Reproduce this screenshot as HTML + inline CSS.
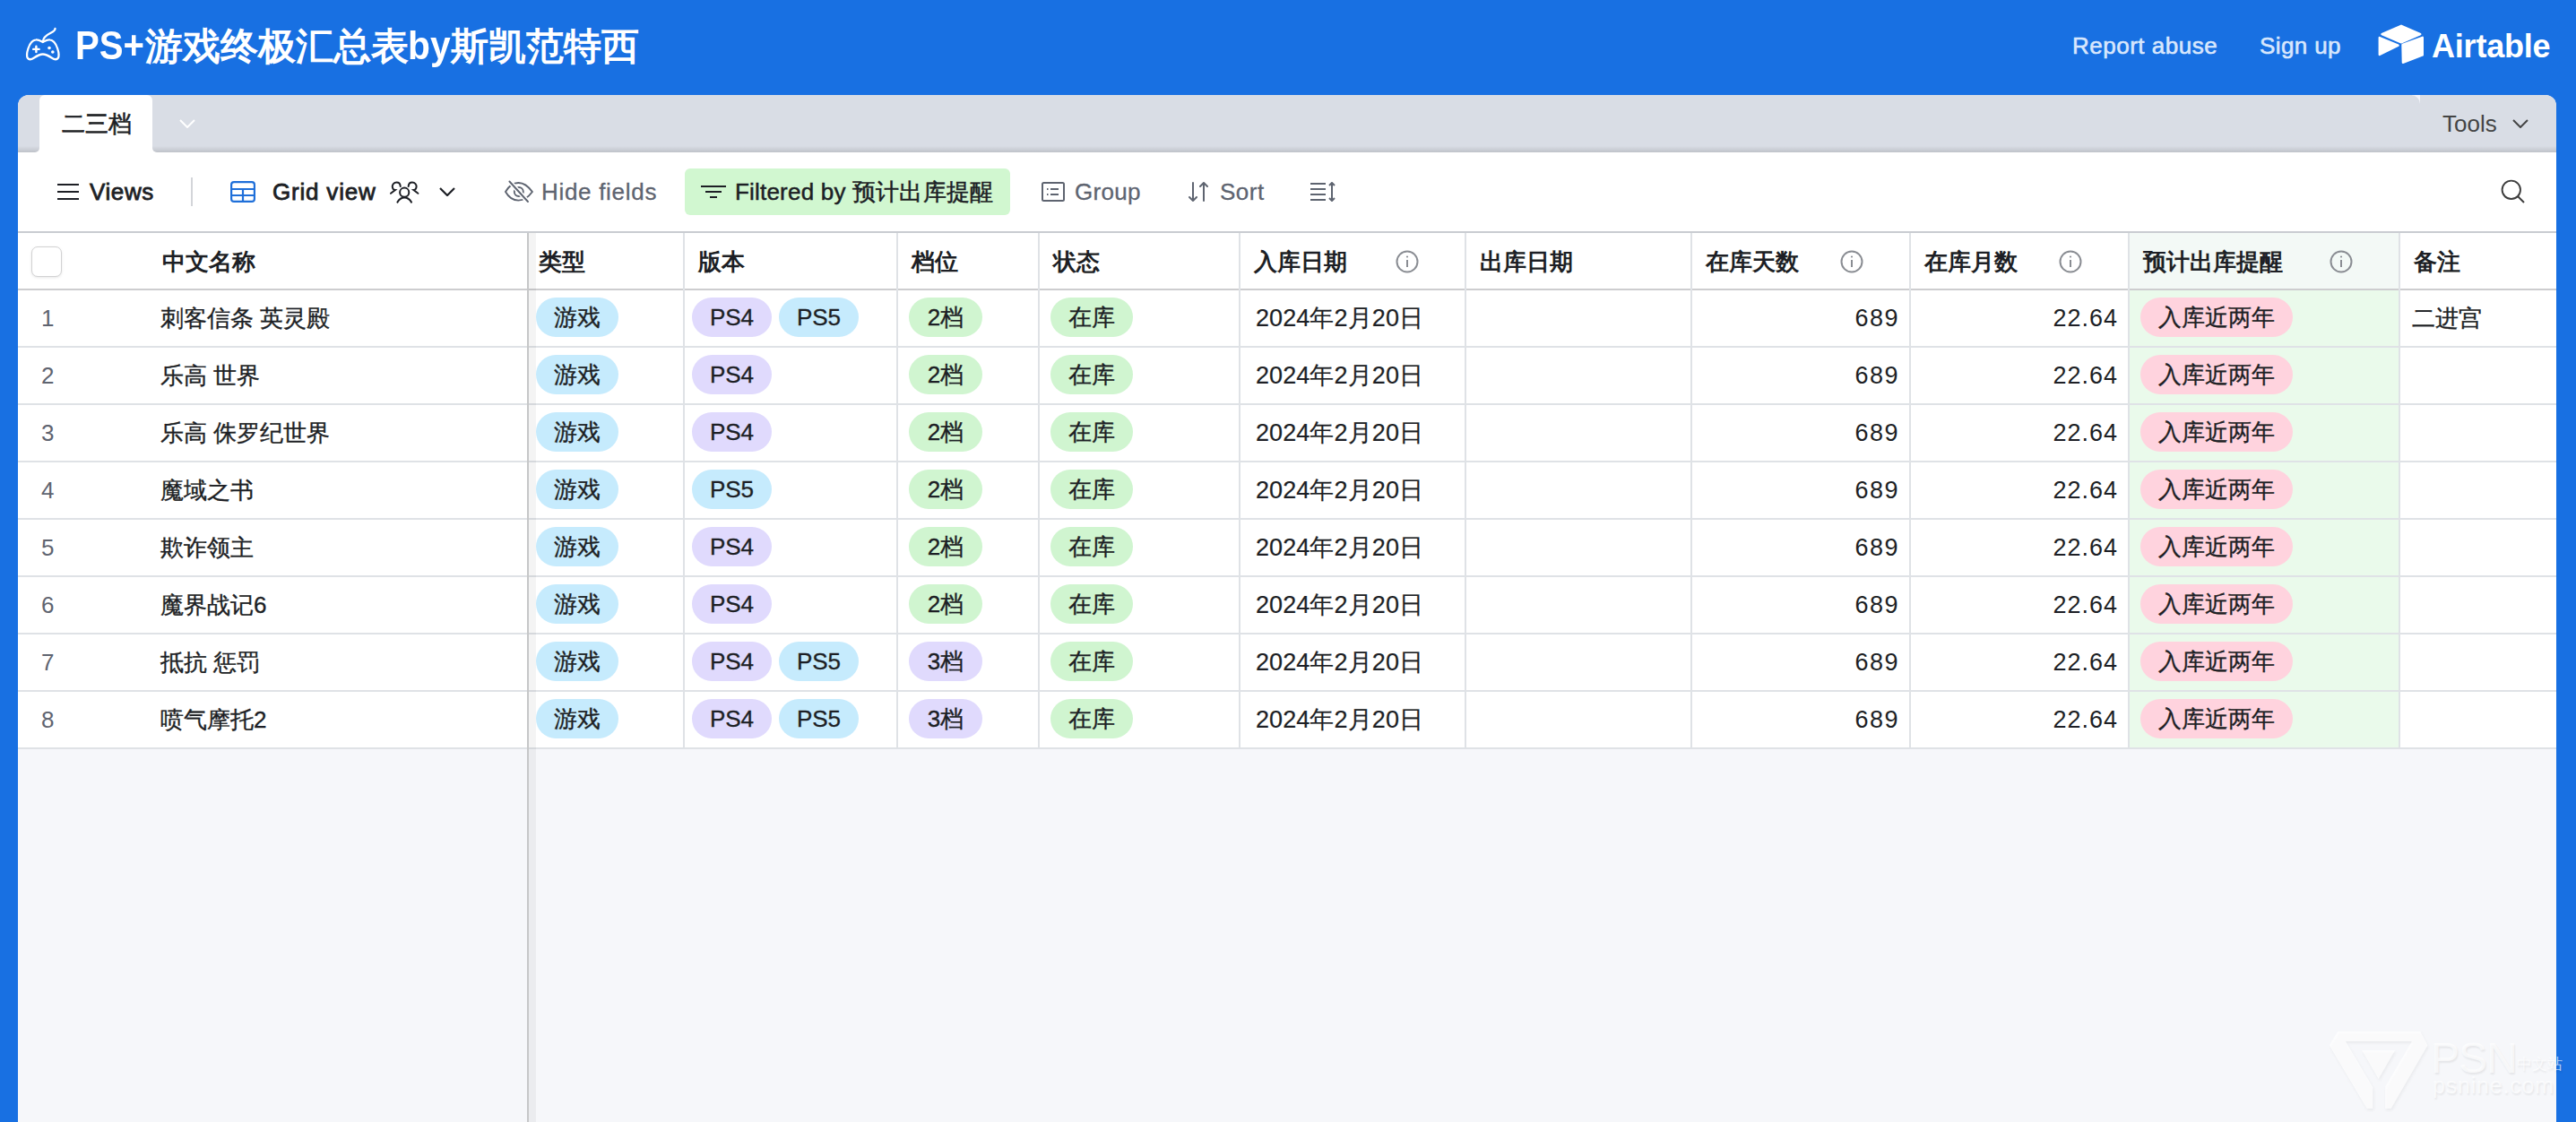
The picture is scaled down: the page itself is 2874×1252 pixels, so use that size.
<!DOCTYPE html>
<html><head><meta charset="utf-8">
<style>
*{box-sizing:border-box;margin:0;padding:0}
html,body{width:2874px;height:1252px;overflow:hidden;background:#1870e2;font-family:"Liberation Sans",sans-serif;color:#1d1f25}
.a{position:absolute}
.t{position:absolute;white-space:nowrap;font-size:26px;line-height:40px}
.pill{position:absolute;height:44px;border-radius:22px;font-size:26px;line-height:44px;white-space:nowrap;color:#1d1f25;text-align:center}
.hd{font-weight:700}
.s{-webkit-text-stroke:0.35px #1d1f25}
.pill{-webkit-text-stroke:0.35px #1d1f25}
</style></head><body>

<svg class="a" style="left:24px;top:26px" width="48" height="46" viewBox="0 0 48 46" fill="none" stroke="#fff" stroke-width="2.3" stroke-linecap="round" stroke-linejoin="round">
<path d="M23.8 20.5 C24 16 28 13 33 10.5 C36 9 37.5 7.5 37.5 6"/>
<path d="M23.8 21 C21 19.5 19 18 16 18.4 C12 18.8 9.5 22 7.5 28 C6 32.5 5.5 37 7 39 C8.5 41 11 40.5 14 38.5 C17 36.5 20 34.5 23.8 34.5 C27.6 34.5 30.6 36.5 33.6 38.5 C36.6 40.5 39.1 41 40.6 39 C42.1 37 41.6 32.5 40.1 28 C38.1 22 35.6 18.8 31.6 18.4 C28.6 18 26.6 19.5 23.8 21 Z"/>
<path d="M13.2 28.9 H19.6 M16.4 25.7 V32.1" stroke-width="2.4"/>
<circle cx="31" cy="27.5" r="1.8" fill="#fff" stroke="none"/>
<circle cx="34.8" cy="32" r="1.8" fill="#fff" stroke="none"/>
</svg>
<div class="t" style="left:84px;top:21px;font-size:44px;line-height:60px;font-weight:700;color:#fff;transform:scaleX(.9125);transform-origin:0 0">PS+</div>
<div class="t" style="left:162px;top:22px;font-size:42px;line-height:60px;font-weight:700;color:#fff">游戏终极汇总表</div>
<div class="t" style="left:455px;top:21px;font-size:44px;line-height:60px;font-weight:700;color:#fff;transform:scaleX(.927);transform-origin:0 0">by</div>
<div class="t" style="left:503px;top:22px;font-size:42px;line-height:60px;font-weight:700;color:#fff">斯凯范特西</div>
<div class="t" style="left:2312px;top:31px;color:#d8e7fd;letter-spacing:0.5px;-webkit-text-stroke:0.6px #d8e7fd">Report abuse</div>
<div class="t" style="left:2521px;top:31px;color:#d8e7fd;letter-spacing:0.4px;-webkit-text-stroke:0.6px #d8e7fd">Sign up</div>
<svg class="a" style="left:2645px;top:22px" width="70" height="56" viewBox="0 0 70 56" fill="#fff" stroke="#fff" stroke-width="2.4" stroke-linejoin="round">
<path d="M12.5 16.2 L34 6.8 L55.3 16.2 L34 25.3 Z"/>
<path d="M9.8 20 L30.6 28.7 L9.8 39 Z"/>
<path d="M35.5 28 L57.8 19.8 V39.5 L35.9 47.8 Z"/>
</svg>
<div class="t" style="left:2713px;top:28px;font-size:36px;line-height:48px;font-weight:700;color:#fff;letter-spacing:-0.2px">Airtable</div>
<div class="a" style="left:20px;top:106px;width:2832px;height:1146px;background:#f6f7fa;border-radius:12px 12px 0 0;overflow:hidden">
<div class="a" style="left:0px;top:0px;width:2832px;height:64px;background:#d9dde5"></div>
<div class="a" style="left:0px;top:57px;width:2832px;height:7px;background:linear-gradient(rgba(0,0,0,0),rgba(0,0,0,0.12))"></div>
</div>
<div class="a" style="left:38px;top:163px;width:138px;height:7px;background:#fff"></div>
<div class="a" style="left:34px;top:158px;width:10px;height:12px;background:#d9dde5;border-bottom-right-radius:5px;overflow:hidden"><div class="a" style="left:0;top:5px;width:10px;height:7px;background:linear-gradient(rgba(0,0,0,0),rgba(0,0,0,0.12))"></div></div>
<div class="a" style="left:170px;top:158px;width:10px;height:12px;background:#d9dde5;border-bottom-left-radius:5px;overflow:hidden"><div class="a" style="left:0;top:5px;width:10px;height:7px;background:linear-gradient(rgba(0,0,0,0),rgba(0,0,0,0.12))"></div></div>
<div class="a" style="left:44px;top:106px;width:126px;height:64px;background:#fff;border-radius:6px 6px 0 0"></div>
<div class="t" style="left:69px;top:118px;font-weight:500;-webkit-text-stroke:0.6px #1d1f25">二三档</div>
<svg class="a" style="left:200px;top:133px" width="18" height="10" viewBox="0 0 18 10" fill="none" stroke="#fff" stroke-width="2"><path d="M1 1 L9 9 L17 1"/></svg>
<div class="a" style="left:2691px;top:106px;width:9px;height:10px;background:#f4f4fb"></div>
<div class="a" style="left:2681px;top:106px;width:19px;height:20px;background:#d9dde5;border-top-right-radius:10px"></div>
<div class="t" style="left:2725px;top:118px;color:#444">Tools</div>
<svg class="a" style="left:2803px;top:133px" width="18" height="10" viewBox="0 0 18 10" fill="none" stroke="#444" stroke-width="2"><path d="M1 1 L9 9 L17 1"/></svg>
<div class="a" style="left:20px;top:170px;width:2832px;height:88px;background:#fff"></div>
<div class="a" style="left:20px;top:258px;width:2832px;height:2px;background:#c9ccd1"></div>
<svg class="a" style="left:64px;top:204px" width="24" height="20" viewBox="0 0 24 20" fill="none" stroke="#1d1f25" stroke-width="2.2"><path d="M0 2 H24 M0 10 H24 M0 18 H24"/></svg>
<div class="t" style="left:100px;top:194px;-webkit-text-stroke:0.8px #1d1f25;letter-spacing:0.6px">Views</div>
<div class="a" style="left:213px;top:198px;width:2px;height:32px;background:#d3d5d9"></div>
<svg class="a" style="left:257px;top:202px" width="28" height="24" viewBox="0 0 28 24" fill="none" stroke="#1f6fd9" stroke-width="2.2"><rect x="1.1" y="1.1" width="25.8" height="21.8" rx="3"/><path d="M1 9 H27 M1 16 H27 M14 9 V23"/></svg>
<div class="t" style="left:304px;top:194px;-webkit-text-stroke:0.8px #1d1f25;letter-spacing:0.8px">Grid view</div>
<svg class="a" style="left:435px;top:202px" width="33" height="26" viewBox="0 0 33 26" fill="none" stroke="#1d1f25" stroke-width="2" stroke-linecap="round"><circle cx="16.2" cy="12.7" r="5.1"/><path d="M8.4 23.6 C10.5 20.2 13 18.6 16.2 18.6 C19.4 18.6 21.9 20.2 24 23.6"/><path d="M11.75 6 C11.5 3 9.5 1.6 7.5 1.6 C4.5 1.6 2.5 4 2.8 6.5 C3 8.5 4.5 10 5.9 10.1 L1 13.8"/><path d="M20.65 6 C20.9 3 22.9 1.6 24.9 1.6 C27.9 1.6 29.9 4 29.6 6.5 C29.4 8.5 27.9 10 26.5 10.1 L31.4 13.8"/></svg>
<svg class="a" style="left:490px;top:209px" width="18" height="10" viewBox="0 0 18 10" fill="none" stroke="#1d1f25" stroke-width="2.2"><path d="M1 1 L9 9 L17 1"/></svg>
<svg class="a" style="left:560px;top:200px" width="38" height="28" viewBox="0 0 38 28" fill="none" stroke="#5e6470" stroke-width="1.9" stroke-linecap="round"><path d="M4 14 C8 7 13 4 18.4 4 C23.8 4 28.8 7 33.9 14 C28.8 21 23.8 23.6 18.4 23.6 C13 23.6 8 21 4 14 Z"/><circle cx="18.8" cy="14" r="5"/><path d="M8.4 2.5 L29 25" stroke="#fff" stroke-width="5"/><path d="M8.4 2.5 L29 25"/></svg>
<div class="t" style="left:604px;top:194px;color:#5e6470;letter-spacing:0.7px;-webkit-text-stroke:0.3px #5e6470">Hide fields</div>
<div class="a" style="left:764px;top:188px;width:363px;height:52px;background:#d1f7d0;border-radius:6px"></div>
<svg class="a" style="left:782px;top:206px" width="28" height="16" viewBox="0 0 28 16" fill="none" stroke="#1d1f25" stroke-width="2.2"><path d="M0 2 H28 M5 8 H23 M10 14 H18"/></svg>
<div class="t" style="left:820px;top:194px;letter-spacing:0.2px;-webkit-text-stroke:0.5px #1d1f25">Filtered by 预计出库提醒</div>
<svg class="a" style="left:1162px;top:203px" width="26" height="22" viewBox="0 0 26 22" fill="none" stroke="#5e6470" stroke-width="2"><rect x="1" y="1" width="24" height="20" rx="1.5"/><path d="M10 8 H19 M10 14 H19"/><path d="M6 8 H7.5 M6 14 H7.5"/></svg>
<div class="t" style="left:1199px;top:194px;color:#5e6470;letter-spacing:0.3px;-webkit-text-stroke:0.3px #5e6470">Group</div>
<svg class="a" style="left:1326px;top:203px" width="22" height="22" viewBox="0 0 22 22" fill="none" stroke="#5e6470" stroke-width="2" stroke-linecap="round" stroke-linejoin="round"><path d="M5 1 V21 M1 17 L5 21 L9 17"/><path d="M17 21 V1 M13 5 L17 1 L21 5"/></svg>
<div class="t" style="left:1361px;top:194px;color:#5e6470;letter-spacing:0.5px;-webkit-text-stroke:0.3px #5e6470">Sort</div>
<svg class="a" style="left:1462px;top:203px" width="28" height="22" viewBox="0 0 28 22" fill="none" stroke="#5e6470" stroke-width="2"><path d="M0 2 H17 M0 8 H17 M0 14 H17 M0 20 H17"/><path d="M24 1 V21 M21 4 L24 1 L27 4 M21 18 L24 21 L27 18" stroke-linejoin="round"/></svg>
<svg class="a" style="left:2790px;top:200px" width="28" height="28" viewBox="0 0 28 28" fill="none" stroke="#3d3d3d" stroke-width="1.9"><circle cx="11.8" cy="11.8" r="10.2"/><path d="M19 19 L26 26"/></svg>
<div class="a" style="left:20px;top:260px;width:2832px;height:576px;background:#fff"></div>
<div class="a" style="left:2376px;top:260px;width:300px;height:576px;background:#eafaeb"></div>
<div class="a" style="left:2376px;top:260px;width:300px;height:62px;background:#f3f9f6"></div>
<div class="a" style="left:20px;top:322px;width:2832px;height:2px;background:#cdcdcf"></div>
<div class="a" style="left:20px;top:386px;width:2832px;height:2px;background:#dfe2e6"></div>
<div class="a" style="left:20px;top:450px;width:2832px;height:2px;background:#dfe2e6"></div>
<div class="a" style="left:20px;top:514px;width:2832px;height:2px;background:#dfe2e6"></div>
<div class="a" style="left:20px;top:578px;width:2832px;height:2px;background:#dfe2e6"></div>
<div class="a" style="left:20px;top:642px;width:2832px;height:2px;background:#dfe2e6"></div>
<div class="a" style="left:20px;top:706px;width:2832px;height:2px;background:#dfe2e6"></div>
<div class="a" style="left:20px;top:770px;width:2832px;height:2px;background:#dfe2e6"></div>
<div class="a" style="left:20px;top:834px;width:2832px;height:2px;background:#dfe2e6"></div>
<div class="a" style="left:762px;top:260px;width:2px;height:576px;background:#dfe2e6"></div>
<div class="a" style="left:1000px;top:260px;width:2px;height:576px;background:#dfe2e6"></div>
<div class="a" style="left:1158px;top:260px;width:2px;height:576px;background:#dfe2e6"></div>
<div class="a" style="left:1382px;top:260px;width:2px;height:576px;background:#dfe2e6"></div>
<div class="a" style="left:1634px;top:260px;width:2px;height:576px;background:#dfe2e6"></div>
<div class="a" style="left:1886px;top:260px;width:2px;height:576px;background:#dfe2e6"></div>
<div class="a" style="left:2130px;top:260px;width:2px;height:576px;background:#dfe2e6"></div>
<div class="a" style="left:2374px;top:260px;width:2px;height:576px;background:#dfe2e6"></div>
<div class="a" style="left:2676px;top:260px;width:2px;height:576px;background:#dfe2e6"></div>
<div class="a" style="left:588px;top:260px;width:2px;height:992px;background:#c6c7c8"></div>
<div class="a" style="left:590px;top:260px;width:8px;height:992px;background:rgba(0,0,0,0.045)"></div>
<div class="a" style="left:35px;top:275px;width:34px;height:34px;border:1.6px solid #d2d2d3;border-radius:7px;background:#fff;box-shadow:0 1px 3px rgba(0,0,0,0.10)"></div>
<div class="t" style="left:181px;top:272px;font-weight:700">中文名称</div>
<div class="t" style="left:601px;top:272px;font-weight:700">类型</div>
<div class="t" style="left:779px;top:272px;font-weight:700">版本</div>
<div class="t" style="left:1017px;top:272px;font-weight:700">档位</div>
<div class="t" style="left:1175px;top:272px;font-weight:700">状态</div>
<div class="t" style="left:1399px;top:272px;font-weight:700">入库日期</div>
<svg class="a" style="left:1557px;top:279px" width="26" height="26" viewBox="0 0 26 26" fill="none" stroke="#8a8d93" stroke-width="2"><circle cx="13" cy="13" r="11.5"/><path d="M13 11 V19"/><circle cx="13" cy="7.5" r="1.1" fill="#8a8d93" stroke="none"/></svg>
<div class="t" style="left:1651px;top:272px;font-weight:700">出库日期</div>
<div class="t" style="left:1903px;top:272px;font-weight:700">在库天数</div>
<svg class="a" style="left:2053px;top:279px" width="26" height="26" viewBox="0 0 26 26" fill="none" stroke="#8a8d93" stroke-width="2"><circle cx="13" cy="13" r="11.5"/><path d="M13 11 V19"/><circle cx="13" cy="7.5" r="1.1" fill="#8a8d93" stroke="none"/></svg>
<div class="t" style="left:2147px;top:272px;font-weight:700">在库月数</div>
<svg class="a" style="left:2297px;top:279px" width="26" height="26" viewBox="0 0 26 26" fill="none" stroke="#8a8d93" stroke-width="2"><circle cx="13" cy="13" r="11.5"/><path d="M13 11 V19"/><circle cx="13" cy="7.5" r="1.1" fill="#8a8d93" stroke="none"/></svg>
<div class="t" style="left:2391px;top:272px;font-weight:700">预计出库提醒</div>
<svg class="a" style="left:2599px;top:279px" width="26" height="26" viewBox="0 0 26 26" fill="none" stroke="#8a8d93" stroke-width="2"><circle cx="13" cy="13" r="11.5"/><path d="M13 11 V19"/><circle cx="13" cy="7.5" r="1.1" fill="#8a8d93" stroke="none"/></svg>
<div class="t" style="left:2693px;top:272px;font-weight:700">备注</div>
<div class="t" style="left:46px;top:335px;color:#5f6470">1</div>
<div class="t" style="left:179px;top:335px;-webkit-text-stroke:0.35px #1d1f25">刺客信条 英灵殿</div>
<div class="pill" style="left:598px;top:332px;width:92px;background:#c6ebfd">游戏</div>
<div class="pill" style="left:772px;top:332px;width:89px;background:#e0dafd">PS4</div>
<div class="pill" style="left:869px;top:332px;width:89px;background:#c6ebfd">PS5</div>
<div class="pill" style="left:1014px;top:332px;width:82px;background:#d0f5d0">2档</div>
<div class="pill" style="left:1172px;top:332px;width:92px;background:#d0f5d0">在库</div>
<div class="t" style="left:1401px;top:335px;font-size:27px;letter-spacing:0.1px;-webkit-text-stroke:0.2px #1d1f25">2024年2月20日</div>
<div class="t" style="left:1900px;top:335px;width:219px;text-align:right;font-size:27px;letter-spacing:1.5px">689</div>
<div class="t" style="left:2140px;top:335px;width:223px;text-align:right;font-size:27px;letter-spacing:1px">22.64</div>
<div class="pill" style="left:2388px;top:332px;width:170px;background:#ffd3de">入库近两年</div>
<div class="t" style="left:46px;top:399px;color:#5f6470">2</div>
<div class="t" style="left:179px;top:399px;-webkit-text-stroke:0.35px #1d1f25">乐高 世界</div>
<div class="pill" style="left:598px;top:396px;width:92px;background:#c6ebfd">游戏</div>
<div class="pill" style="left:772px;top:396px;width:89px;background:#e0dafd">PS4</div>
<div class="pill" style="left:1014px;top:396px;width:82px;background:#d0f5d0">2档</div>
<div class="pill" style="left:1172px;top:396px;width:92px;background:#d0f5d0">在库</div>
<div class="t" style="left:1401px;top:399px;font-size:27px;letter-spacing:0.1px;-webkit-text-stroke:0.2px #1d1f25">2024年2月20日</div>
<div class="t" style="left:1900px;top:399px;width:219px;text-align:right;font-size:27px;letter-spacing:1.5px">689</div>
<div class="t" style="left:2140px;top:399px;width:223px;text-align:right;font-size:27px;letter-spacing:1px">22.64</div>
<div class="pill" style="left:2388px;top:396px;width:170px;background:#ffd3de">入库近两年</div>
<div class="t" style="left:46px;top:463px;color:#5f6470">3</div>
<div class="t" style="left:179px;top:463px;-webkit-text-stroke:0.35px #1d1f25">乐高 侏罗纪世界</div>
<div class="pill" style="left:598px;top:460px;width:92px;background:#c6ebfd">游戏</div>
<div class="pill" style="left:772px;top:460px;width:89px;background:#e0dafd">PS4</div>
<div class="pill" style="left:1014px;top:460px;width:82px;background:#d0f5d0">2档</div>
<div class="pill" style="left:1172px;top:460px;width:92px;background:#d0f5d0">在库</div>
<div class="t" style="left:1401px;top:463px;font-size:27px;letter-spacing:0.1px;-webkit-text-stroke:0.2px #1d1f25">2024年2月20日</div>
<div class="t" style="left:1900px;top:463px;width:219px;text-align:right;font-size:27px;letter-spacing:1.5px">689</div>
<div class="t" style="left:2140px;top:463px;width:223px;text-align:right;font-size:27px;letter-spacing:1px">22.64</div>
<div class="pill" style="left:2388px;top:460px;width:170px;background:#ffd3de">入库近两年</div>
<div class="t" style="left:46px;top:527px;color:#5f6470">4</div>
<div class="t" style="left:179px;top:527px;-webkit-text-stroke:0.35px #1d1f25">魔域之书</div>
<div class="pill" style="left:598px;top:524px;width:92px;background:#c6ebfd">游戏</div>
<div class="pill" style="left:772px;top:524px;width:89px;background:#c6ebfd">PS5</div>
<div class="pill" style="left:1014px;top:524px;width:82px;background:#d0f5d0">2档</div>
<div class="pill" style="left:1172px;top:524px;width:92px;background:#d0f5d0">在库</div>
<div class="t" style="left:1401px;top:527px;font-size:27px;letter-spacing:0.1px;-webkit-text-stroke:0.2px #1d1f25">2024年2月20日</div>
<div class="t" style="left:1900px;top:527px;width:219px;text-align:right;font-size:27px;letter-spacing:1.5px">689</div>
<div class="t" style="left:2140px;top:527px;width:223px;text-align:right;font-size:27px;letter-spacing:1px">22.64</div>
<div class="pill" style="left:2388px;top:524px;width:170px;background:#ffd3de">入库近两年</div>
<div class="t" style="left:46px;top:591px;color:#5f6470">5</div>
<div class="t" style="left:179px;top:591px;-webkit-text-stroke:0.35px #1d1f25">欺诈领主</div>
<div class="pill" style="left:598px;top:588px;width:92px;background:#c6ebfd">游戏</div>
<div class="pill" style="left:772px;top:588px;width:89px;background:#e0dafd">PS4</div>
<div class="pill" style="left:1014px;top:588px;width:82px;background:#d0f5d0">2档</div>
<div class="pill" style="left:1172px;top:588px;width:92px;background:#d0f5d0">在库</div>
<div class="t" style="left:1401px;top:591px;font-size:27px;letter-spacing:0.1px;-webkit-text-stroke:0.2px #1d1f25">2024年2月20日</div>
<div class="t" style="left:1900px;top:591px;width:219px;text-align:right;font-size:27px;letter-spacing:1.5px">689</div>
<div class="t" style="left:2140px;top:591px;width:223px;text-align:right;font-size:27px;letter-spacing:1px">22.64</div>
<div class="pill" style="left:2388px;top:588px;width:170px;background:#ffd3de">入库近两年</div>
<div class="t" style="left:46px;top:655px;color:#5f6470">6</div>
<div class="t" style="left:179px;top:655px;-webkit-text-stroke:0.35px #1d1f25">魔界战记6</div>
<div class="pill" style="left:598px;top:652px;width:92px;background:#c6ebfd">游戏</div>
<div class="pill" style="left:772px;top:652px;width:89px;background:#e0dafd">PS4</div>
<div class="pill" style="left:1014px;top:652px;width:82px;background:#d0f5d0">2档</div>
<div class="pill" style="left:1172px;top:652px;width:92px;background:#d0f5d0">在库</div>
<div class="t" style="left:1401px;top:655px;font-size:27px;letter-spacing:0.1px;-webkit-text-stroke:0.2px #1d1f25">2024年2月20日</div>
<div class="t" style="left:1900px;top:655px;width:219px;text-align:right;font-size:27px;letter-spacing:1.5px">689</div>
<div class="t" style="left:2140px;top:655px;width:223px;text-align:right;font-size:27px;letter-spacing:1px">22.64</div>
<div class="pill" style="left:2388px;top:652px;width:170px;background:#ffd3de">入库近两年</div>
<div class="t" style="left:46px;top:719px;color:#5f6470">7</div>
<div class="t" style="left:179px;top:719px;-webkit-text-stroke:0.35px #1d1f25">抵抗 惩罚</div>
<div class="pill" style="left:598px;top:716px;width:92px;background:#c6ebfd">游戏</div>
<div class="pill" style="left:772px;top:716px;width:89px;background:#e0dafd">PS4</div>
<div class="pill" style="left:869px;top:716px;width:89px;background:#c6ebfd">PS5</div>
<div class="pill" style="left:1014px;top:716px;width:82px;background:#e0dafd">3档</div>
<div class="pill" style="left:1172px;top:716px;width:92px;background:#d0f5d0">在库</div>
<div class="t" style="left:1401px;top:719px;font-size:27px;letter-spacing:0.1px;-webkit-text-stroke:0.2px #1d1f25">2024年2月20日</div>
<div class="t" style="left:1900px;top:719px;width:219px;text-align:right;font-size:27px;letter-spacing:1.5px">689</div>
<div class="t" style="left:2140px;top:719px;width:223px;text-align:right;font-size:27px;letter-spacing:1px">22.64</div>
<div class="pill" style="left:2388px;top:716px;width:170px;background:#ffd3de">入库近两年</div>
<div class="t" style="left:46px;top:783px;color:#5f6470">8</div>
<div class="t" style="left:179px;top:783px;-webkit-text-stroke:0.35px #1d1f25">喷气摩托2</div>
<div class="pill" style="left:598px;top:780px;width:92px;background:#c6ebfd">游戏</div>
<div class="pill" style="left:772px;top:780px;width:89px;background:#e0dafd">PS4</div>
<div class="pill" style="left:869px;top:780px;width:89px;background:#c6ebfd">PS5</div>
<div class="pill" style="left:1014px;top:780px;width:82px;background:#e0dafd">3档</div>
<div class="pill" style="left:1172px;top:780px;width:92px;background:#d0f5d0">在库</div>
<div class="t" style="left:1401px;top:783px;font-size:27px;letter-spacing:0.1px;-webkit-text-stroke:0.2px #1d1f25">2024年2月20日</div>
<div class="t" style="left:1900px;top:783px;width:219px;text-align:right;font-size:27px;letter-spacing:1.5px">689</div>
<div class="t" style="left:2140px;top:783px;width:223px;text-align:right;font-size:27px;letter-spacing:1px">22.64</div>
<div class="pill" style="left:2388px;top:780px;width:170px;background:#ffd3de">入库近两年</div>
<div class="t" style="left:2691px;top:335px;-webkit-text-stroke:0.35px #1d1f25">二进宫</div>
<svg class="a" style="left:2590px;top:1140px;filter:drop-shadow(1px 2px 1.5px rgba(0,0,0,0.07))" width="130" height="110" viewBox="0 0 130 110">
<path fill="rgba(255,255,255,0.7)" fill-rule="evenodd" d="M8.8 26.5 L18.2 11 L110.3 11 L118.5 26.5 L77.7 97 L71.1 97 L71.1 72.8 L100.9 22 L27 22 L57.3 73.3 L57.3 97 L50.7 97 Z M45.2 32 L82.1 32 L63.7 64 Z"/>
</svg>
<div class="t" style="left:2712px;top:1151px;font-size:48px;line-height:60px;color:rgba(255,255,255,0.7);text-shadow:1px 2px 2px rgba(0,0,0,0.07);letter-spacing:-1px">PSN</div>
<div class="t" style="left:2808px;top:1176px;font-size:17px;line-height:24px;color:rgba(255,255,255,0.7);text-shadow:1px 2px 2px rgba(0,0,0,0.07)">中文站</div>
<div class="t" style="left:2714px;top:1195px;font-size:25px;line-height:32px;color:rgba(255,255,255,0.7);text-shadow:1px 2px 2px rgba(0,0,0,0.07);letter-spacing:0.8px">psnine.com</div>
</body></html>
